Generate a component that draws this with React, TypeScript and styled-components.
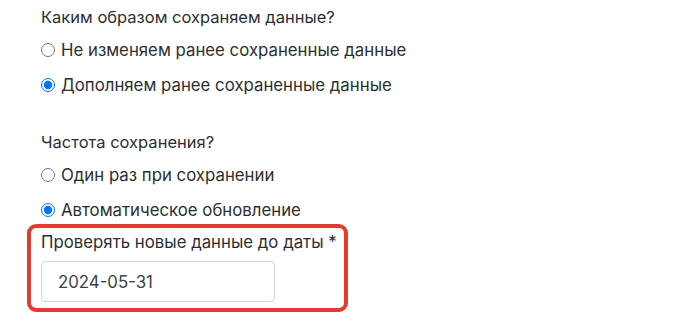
import * as React from 'react';
import styled, { createGlobalStyle } from 'styled-components';

const GlobalStyle = createGlobalStyle`
    html, body {
        margin: 0;
        padding: 0;
        background: #ffffff;
    }
    body {
        font-family: Inter, "Noto Sans", sans-serif;
        color: #2b2f33;
    }
`;

const Page = styled.div`
    width: 691px;
    height: 320px;
    overflow: hidden;
    padding: 6px 0 0 41px;
    box-sizing: border-box;
    display: flex;
    flex-direction: column;
    align-items: flex-start;
`;

const Group = styled.fieldset<{ $spaced?: boolean }>`
    margin: 0 0 ${(p) => (p.$spaced ? 35 : 0)}px;
    padding: 0;
    border: none;
    display: flex;
    flex-direction: column;
    gap: 13px;
`;

const Question = styled.div`
    font-size: 16.5px;
    line-height: 22px;
    margin-bottom: -2px;
`;

const Option = styled.label`
    display: flex;
    align-items: center;
    gap: 6px;
    font-size: 16.8px;
    line-height: 22px;
    height: 22px;
    white-space: nowrap;
    cursor: pointer;
`;

const Radio = styled.input.attrs({ type: 'radio' })`
    width: 14px;
    height: 14px;
    margin: 0;
    accent-color: #0075ff;
`;

const Highlight = styled.div`
    width: 321px;
    margin: 3px 0 0 -14px;
    box-sizing: border-box;
    border: 4px solid #e53a2f;
    border-radius: 9px;
    padding: 3px 10px 6px 10px;
`;

const FieldLabel = styled.div`
    font-size: 16.8px;
    line-height: 22px;
    white-space: nowrap;
    margin-bottom: 8px;
`;

const DateInput = styled.input`
    display: block;
    width: 234px;
    height: 41px;
    box-sizing: border-box;
    border: 1px solid #d3d6da;
    border-radius: 4px;
    padding: 0 16px;
    font-family: Inter, "Noto Sans", sans-serif;
    font-size: 16.8px;
    color: #3a3f44;
    background: #fff;
`;

const RadioGroup: React.FC<{
    name: string;
    question: string;
    options: string[];
    value: number;
    spaced?: boolean;
}> = ({ name, question, options, value, spaced }) => {
    const [selected, setSelected] = React.useState(value);
    return (
        <Group $spaced={spaced}>
            <Question>{question}</Question>
            {options.map((opt, i) => (
                <Option key={i}>
                    <Radio
                        name={name}
                        checked={selected === i}
                        onChange={() => setSelected(i)}
                    />
                    {opt}
                </Option>
            ))}
        </Group>
    );
};

const App: React.FC = () => {
    const [date, setDate] = React.useState('2024-05-31');
    return (
        <Page>
            <GlobalStyle />
            <RadioGroup
                name="mode"
                question="Каким образом сохраняем данные?"
                options={[
                    'Не изменяем ранее сохраненные данные',
                    'Дополняем ранее сохраненные данные',
                ]}
                value={1}
                spaced
            />
            <RadioGroup
                name="freq"
                question="Частота сохранения?"
                options={['Один раз при сохранении', 'Автоматическое обновление']}
                value={1}
            />
            <Highlight>
                <FieldLabel>Проверять новые данные до даты *</FieldLabel>
                <DateInput
                    type="text"
                    value={date}
                    onChange={(e) => setDate(e.target.value)}
                />
            </Highlight>
        </Page>
    );
};

export default App;
